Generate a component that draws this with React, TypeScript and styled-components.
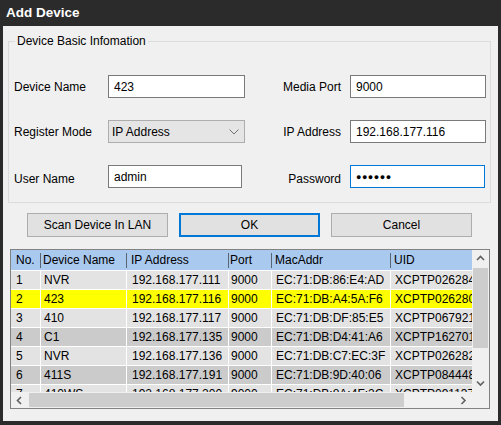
import styled, { createGlobalStyle } from 'styled-components'

type Tone = 'light' | 'dark' | 'selected'

interface DeviceRow {
  no: string
  name: string
  ip: string
  port: string
  mac: string
  uid: string
  tone: Tone
}

const columns = [
  { key: 'no', title: 'No.', width: 29, pad: 5 },
  { key: 'name', title: 'Device Name', width: 86, pad: 3 },
  { key: 'ip', title: 'IP Address', width: 102, pad: 5 },
  { key: 'port', title: 'Port', width: 43, pad: 2 },
  { key: 'mac', title: 'MacAddr', width: 119, pad: 4 },
  { key: 'uid', title: 'UID', width: 160, pad: 4 },
] as const

const gridColumns = columns.map((c) => `${c.width}px`).join(' ')

const devices: DeviceRow[] = [
  { no: '1', name: 'NVR', ip: '192.168.177.111', port: '9000', mac: 'EC:71:DB:86:E4:AD', uid: 'XCPTP026284RJPNH', tone: 'light' },
  { no: '2', name: '423', ip: '192.168.177.116', port: '9000', mac: 'EC:71:DB:A4:5A:F6', uid: 'XCPTP026280WPKQB', tone: 'selected' },
  { no: '3', name: '410', ip: '192.168.177.117', port: '9000', mac: 'EC:71:DB:DF:85:E5', uid: 'XCPTP067921LMXTS', tone: 'light' },
  { no: '4', name: 'C1', ip: '192.168.177.135', port: '9000', mac: 'EC:71:DB:D4:41:A6', uid: 'XCPTP162701ZBDEF', tone: 'dark' },
  { no: '5', name: 'NVR', ip: '192.168.177.136', port: '9000', mac: 'EC:71:DB:C7:EC:3F', uid: 'XCPTP026282HTUVA', tone: 'light' },
  { no: '6', name: '411S', ip: '192.168.177.191', port: '9000', mac: 'EC:71:DB:9D:40:06', uid: 'XCPTP084448GNMRC', tone: 'dark' },
  { no: '7', name: '410WS', ip: '192.168.177.200', port: '9000', mac: 'EC:71:DB:8A:4F:2C', uid: 'XCPTP091137KQWEX', tone: 'light' },
]

function Chevron({ dir }: { dir: 'up' | 'down' | 'left' | 'right' }) {
  const points = {
    up: '1,6 4.5,2.5 8,6',
    down: '1,2.5 4.5,6 8,2.5',
    left: '6,1 2.5,4.5 6,8',
    right: '2.5,1 6,4.5 2.5,8',
  }[dir]
  return (
    <svg width="9" height="9" viewBox="0 0 9 9">
      <polyline points={points} fill="none" stroke="#606060" strokeWidth="1.6" />
    </svg>
  )
}

export default function App() {
  return (
    <>
      <GlobalStyle />
      <Window>
        <TitleBar>Add Device</TitleBar>
        <Body>
          <GroupBox>
            <Legend>Device Basic Infomation</Legend>
            <FieldGrid>
              <Label>Device Name</Label>
              <TextInput readOnly value="423" $w={137} />
              <Label $right>Media Port</Label>
              <TextInput readOnly value="9000" $w={136} />

              <Label>Register Mode</Label>
              <Combo>
                <span>IP Address</span>
                <svg width="10" height="6" viewBox="0 0 10 6">
                  <polyline points="0.5,0.5 5,5 9.5,0.5" fill="none" stroke="#707070" strokeWidth="1" />
                </svg>
              </Combo>
              <Label $right>IP Address</Label>
              <TextInput readOnly value="192.168.177.116" $w={136} />

              <Label $drop>User Name</Label>
              <TextInput readOnly value="admin" $w={134} />
              <Label $right $drop>Password</Label>
              <TextInput readOnly value="●●●●●●" $w={135} $focused $masked />
            </FieldGrid>
          </GroupBox>

          <ButtonRow>
            <PushButton>Scan Device In LAN</PushButton>
            <PushButton $default>OK</PushButton>
            <PushButton>Cancel</PushButton>
          </ButtonRow>

          <ListBox>
            <Viewport>
              <HeaderRow $cols={gridColumns}>
                {columns.map((c, i) => (
                  <HeaderCell key={c.key} $pad={c.pad} $sep={i > 0}>
                    {c.title}
                  </HeaderCell>
                ))}
              </HeaderRow>
              {devices.map((d) => (
                <Row key={d.no} $cols={gridColumns} $tone={d.tone}>
                  {columns.map((c) => (
                    <Cell key={c.key} $pad={c.pad}>
                      {d[c.key]}
                    </Cell>
                  ))}
                </Row>
              ))}
            </Viewport>

            <VScroll>
              <ArrowBox $v>
                <Chevron dir="up" />
              </ArrowBox>
              <Track $v>
                <Thumb $v />
              </Track>
              <ArrowBox $v>
                <Chevron dir="down" />
              </ArrowBox>
            </VScroll>

            <HScroll>
              <ArrowBox>
                <Chevron dir="left" />
              </ArrowBox>
              <Track>
                <Thumb />
              </Track>
              <ArrowBox>
                <Chevron dir="right" />
              </ArrowBox>
            </HScroll>

            <Corner />
          </ListBox>
        </Body>
      </Window>
    </>
  )
}

const GlobalStyle = createGlobalStyle`
  html, body {
    margin: 0;
    padding: 0;
    background: #2b2b2b;
  }
  body {
    font-family: "Liberation Sans", Arial, sans-serif;
    font-size: 12px;
    color: #000;
  }
  * {
    box-sizing: border-box;
  }
`

const Window = styled.div`
  width: 501px;
  height: 425px;
  display: flex;
  flex-direction: column;
  background: #2b2b2b;
  padding: 0 3px 4px 3px;
`

const TitleBar = styled.div`
  height: 26px;
  flex: none;
  display: flex;
  align-items: center;
  padding: 0 3px 1px;
  color: #fff;
  font-weight: bold;
  font-size: 13.5px;
`

const Body = styled.div`
  flex: 1;
  background: #f0f0f0;
  display: flex;
  flex-direction: column;
  padding: 8px 7px 0 5px;
`

const GroupBox = styled.fieldset`
  margin: 0;
  border: 1px solid #dcdcdc;
  padding: 27px 4px 14px 5px;
  min-width: 0;
`

const Legend = styled.legend`
  padding: 0 2px;
  margin-left: 1px;
  font-size: 12px;
`

const FieldGrid = styled.div`
  display: grid;
  grid-template-columns: 94px 137px 105px 136px;
  grid-auto-rows: 23px;
  row-gap: 22px;
  align-items: center;
`

const Label = styled.span<{ $right?: boolean; $drop?: boolean }>`
  text-align: ${({ $right }) => ($right ? 'right' : 'left')};
  padding-right: ${({ $right }) => ($right ? '9px' : '0')};
  padding-top: ${({ $drop }) => ($drop ? '5px' : '1px')};
  white-space: nowrap;
`

const TextInput = styled.input<{ $w: number; $focused?: boolean; $masked?: boolean }>`
  width: ${({ $w }) => $w}px;
  height: 23px;
  margin: 0;
  padding: 0 5px;
  border: 1px solid ${({ $focused }) => ($focused ? '#0078d7' : '#7a7a7a')};
  background: #fff;
  font-family: inherit;
  font-size: ${({ $masked }) => ($masked ? '9px' : '12px')};
  letter-spacing: ${({ $masked }) => ($masked ? '0.5px' : 'normal')};
  color: #000;
  outline: none;
`

const Combo = styled.div`
  width: 137px;
  height: 23px;
  display: flex;
  align-items: center;
  justify-content: space-between;
  padding: 0 5px 0 3px;
  border: 1px solid #adadad;
  background: #e5e5e5;
`

const ButtonRow = styled.div`
  display: flex;
  gap: 11px;
  margin: 10px 0 0 19px;
`

const PushButton = styled.button<{ $default?: boolean }>`
  width: 141px;
  height: 24px;
  margin: 0;
  padding: 0;
  border: ${({ $default }) => ($default ? '2px solid #0078d7' : '1px solid #adadad')};
  background: #e1e1e1;
  font-family: inherit;
  font-size: 12px;
  color: #000;
`

const ListBox = styled.div`
  width: 480px;
  height: 160px;
  margin: 12px 0 0 2px;
  border: 1px solid #828282;
  display: grid;
  grid-template-columns: 1fr 17px;
  grid-template-rows: 1fr 16px;
`

const Viewport = styled.div`
  overflow: hidden;
  background: #fff;
`

const HeaderRow = styled.div<{ $cols: string }>`
  display: grid;
  grid-template-columns: ${({ $cols }) => $cols};
  height: 20px;
  background: #a9c9ee;
`

const HeaderCell = styled.div<{ $pad: number; $sep: boolean }>`
  padding-left: ${({ $pad }) => $pad}px;
  line-height: 21px;
  white-space: nowrap;
  overflow: hidden;
  background: ${({ $sep }) =>
    $sep ? 'linear-gradient(#5a6472, #5a6472) left 3px / 1px 15px no-repeat' : 'none'};
`

const rowColors: Record<Tone, string> = {
  light: '#e3e3e3',
  dark: '#cbcbcb',
  selected: '#ffff00',
}

const Row = styled.div<{ $cols: string; $tone: Tone }>`
  display: grid;
  grid-template-columns: ${({ $cols }) => $cols};
  height: 19px;
  border-top: 1px solid #fff;
  background: ${({ $tone }) => rowColors[$tone]};
`

const Cell = styled.div<{ $pad: number }>`
  padding-left: ${({ $pad }) => $pad}px;
  border-left: 1px solid #fff;
  line-height: 18px;
  white-space: nowrap;
  overflow: hidden;

  &:first-child {
    border-left: none;
  }
`

const VScroll = styled.div`
  display: flex;
  flex-direction: column;
  background: #f0f0f0;
`

const HScroll = styled.div`
  display: flex;
  background: #f0f0f0;
`

const ArrowBox = styled.div<{ $v?: boolean }>`
  flex: none;
  width: ${({ $v }) => ($v ? '100%' : '17px')};
  height: ${({ $v }) => ($v ? '17px' : '100%')};
  display: flex;
  align-items: center;
  justify-content: center;
`

const Track = styled.div<{ $v?: boolean }>`
  flex: 1;
  display: flex;
  flex-direction: ${({ $v }) => ($v ? 'column' : 'row')};
  padding: ${({ $v }) => ($v ? '1px 1px 0' : '1px 0 1px 1px')};
`

const Thumb = styled.div<{ $v?: boolean }>`
  background: #cdcdcd;
  width: ${({ $v }) => ($v ? '100%' : '375px')};
  height: ${({ $v }) => ($v ? '80px' : '100%')};
`

const Corner = styled.div`
  background: #f0f0f0;
`
